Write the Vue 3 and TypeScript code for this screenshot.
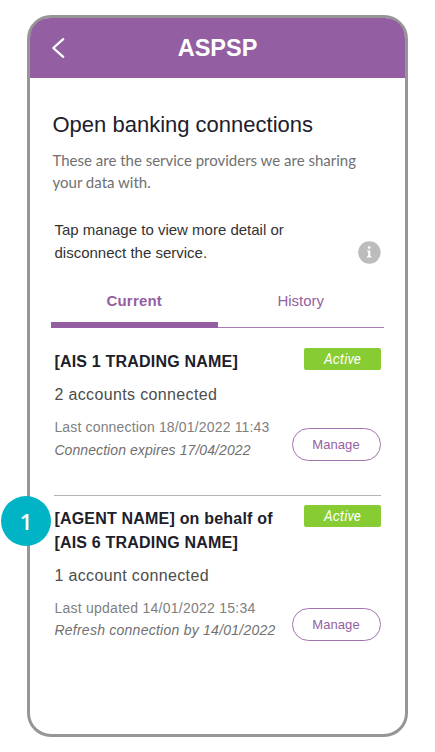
<script setup lang="ts">
import { ref } from 'vue'

interface Connection {
  id: number
  title: string[]
  accounts: string
  last: string
  expiry: string
  status: string
  marker?: string
}

const activeTab = ref<'current' | 'history'>('current')

const connections: Connection[] = [
  {
    id: 1,
    title: ['[AIS 1 TRADING NAME]'],
    accounts: '2 accounts connected',
    last: 'Last connection 18/01/2022 11:43',
    expiry: 'Connection expires 17/04/2022',
    status: 'Active',
  },
  {
    id: 2,
    title: ['[AGENT NAME] on behalf of', '[AIS 6 TRADING NAME]'],
    accounts: '1 account connected',
    last: 'Last updated 14/01/2022 15:34',
    expiry: 'Refresh connection by 14/01/2022',
    status: 'Active',
    marker: '1',
  },
]
</script>

<template>
  <main class="stage">
    <div class="phone">
      <header class="bar">
        <svg class="back" width="14" height="22" viewBox="0 0 14 22" fill="none">
          <path d="M12.2 2.2 L2.3 11 L12.2 19.8" stroke="#fff" stroke-width="2.3" stroke-linecap="round" stroke-linejoin="round" />
        </svg>
        <h1>ASPSP</h1>
      </header>

      <section class="content">
        <h2>Open banking connections</h2>
        <p class="lead">These are the service providers we are sharing<br />your data with.</p>

        <div class="hint">
          <p>Tap manage to view more detail or<br />disconnect the service.</p>
          <svg class="info" width="24" height="24" viewBox="0 0 24 24">
            <circle cx="12.4" cy="12.5" r="11.2" fill="#bcbcbc" />
            <circle cx="12.2" cy="7.6" r="1.4" fill="#fff" />
            <path d="M10.2 10.4 H13.3 V16.3 H14.5 V17.6 H10 V16.3 H11.2 V11.7 H10.2 Z" fill="#fff" />
          </svg>
        </div>

        <nav class="tabs">
          <button class="tab" :class="{ on: activeTab === 'current' }" @click="activeTab = 'current'">Current</button>
          <button class="tab" :class="{ on: activeTab === 'history' }" @click="activeTab = 'history'">History</button>
        </nav>

        <article v-for="c in connections" :key="c.id" class="card">
          <span v-if="c.marker" class="marker">{{ c.marker }}</span>
          <div class="info-col">
            <h3><span v-for="line in c.title" :key="line">{{ line }}</span></h3>
            <p class="accounts">{{ c.accounts }}</p>
            <p class="last">{{ c.last }}</p>
            <p class="expiry">{{ c.expiry }}</p>
          </div>
          <div class="side">
            <span class="status">{{ c.status }}</span>
            <button class="manage">Manage</button>
          </div>
        </article>
      </section>
    </div>
  </main>
</template>

<style>
body {
  margin: 0;
  background: #fff;
}
</style>

<style scoped>
* {
  box-sizing: border-box;
}
h1, h2, h3, p {
  margin: 0;
  font-weight: 400;
}
button {
  font: inherit;
  background: none;
  border: 0;
  padding: 0;
}
.stage {
  width: 435px;
  height: 752px;
  padding: 15px 27px;
  font-family: "Liberation Sans", Arial, sans-serif;
}
.phone {
  width: 381px;
  height: 722px;
  border: 3px solid #969696;
  border-radius: 24px;
  background: #fff;
}
.bar {
  display: grid;
  grid-template-columns: 40px 1fr 40px;
  align-items: center;
  height: 60px;
  background: #945fa2;
  border-radius: 20px 20px 0 0;
}
.back {
  margin-left: 21px;
}
h1 {
  color: #fff;
  font-size: 23.5px;
  font-weight: 700;
  line-height: 28px;
  text-align: center;
}
.content {
  padding: 33px 21px 0;
}
h2 {
  padding-left: 1.5px;
  font-size: 22px;
  line-height: 28px;
  color: #20202a;
  white-space: nowrap;
}
.lead {
  margin-top: 10px;
  padding-left: 1.5px;
  font-family: Lato, sans-serif;
  font-size: 15px;
  line-height: 22px;
  color: #707070;
  white-space: nowrap;
}
.hint {
  display: flex;
  justify-content: space-between;
  align-items: flex-end;
  margin-top: 25px;
  padding: 0 3px 0 3.5px;
  font-size: 15px;
  line-height: 23px;
  color: #333;
}
.info {
  flex: none;
}
.tabs {
  display: grid;
  grid-template-columns: 1fr 1fr;
  height: 38px;
  margin-top: 26px;
  box-shadow: inset 0 -1px 0 #a97bb6;
}
.tab {
  display: block;
  padding: 1px 0 11px;
  border-bottom: 6px solid transparent;
  font-size: 15px;
  line-height: 20px;
  color: #945fa2;
}
.tab.on {
  font-weight: 700;
  letter-spacing: 0.2px;
  border-color: #945fa2;
}
.card {
  position: relative;
  display: flex;
  justify-content: space-between;
  margin: 0 3px;
  padding: 21px 0 34px;
  height: 167px;
}
.card + .card {
  padding-top: 10px;
  height: 146px;
  border-top: 1px solid #b4b4b4;
}
.info-col {
  width: 230px;
  padding: 1px 0 0 0.4px;
  white-space: nowrap;
}
h3 {
  font-size: 16px;
  font-weight: 700;
  line-height: 24px;
  letter-spacing: 0.2px;
  color: #20202a;
}
h3 span {
  display: block;
}
.accounts {
  margin-top: 9px;
  font-size: 16px;
  line-height: 24px;
  letter-spacing: 0.36px;
  color: #4d4d4d;
}
.last,
.expiry {
  font-size: 14px;
  line-height: 23px;
  letter-spacing: 0.16px;
  color: #808080;
}
.last {
  margin-top: 9px;
}
.expiry {
  font-style: italic;
  letter-spacing: 0.08px;
  color: #707070;
}
.card + .card .last,
.card + .card .expiry {
  letter-spacing: 0.25px;
}
.card + .card .expiry {
  line-height: 20px;
}
.side {
  display: flex;
  flex: none;
  flex-direction: column;
  align-items: flex-end;
  justify-content: space-between;
  height: 113px;
  margin-top: -1px;
}
.card + .card .side {
  height: 136px;
}
.status {
  width: 77px;
  height: 22px;
  border-radius: 2px;
  background: #8c3;
  color: #fff;
  font: italic 400 13.8px/22px Roboto, sans-serif;
  text-align: center;
}
.manage {
  width: 89px;
  height: 33px;
  padding-right: 1px;
  border: 1px solid #a273b0;
  border-radius: 17px;
  color: #945fa2;
  font-size: 13px;
  line-height: 31px;
  letter-spacing: 0.1px;
}
.marker {
  position: absolute;
  top: 0;
  left: -53px;
  width: 50px;
  height: 50px;
  border-radius: 50%;
  background: #00b4c5;
  color: #fff;
  font: 600 22px/50px "Open Sans", sans-serif;
  text-align: center;
}
</style>
